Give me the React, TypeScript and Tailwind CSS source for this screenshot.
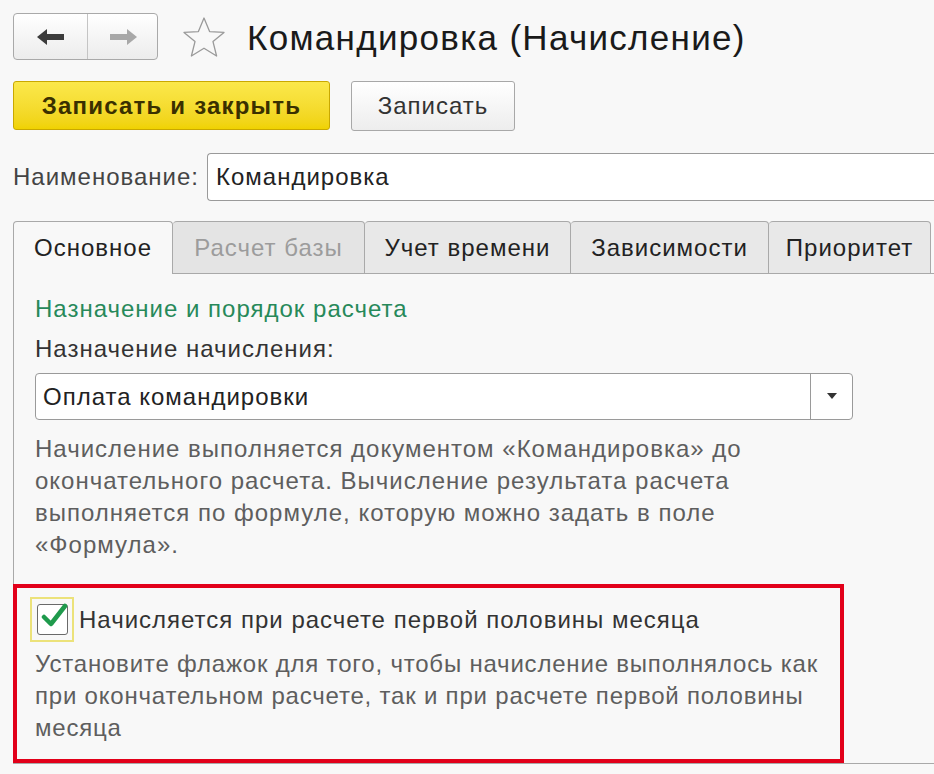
export default function App() {
  const font = { fontFamily: '"Liberation Sans", Arial, sans-serif' };

  return (
    <div
      className="w-[934px] h-[774px] overflow-hidden bg-[#f8f8f8] text-[#333] pl-[13px] tracking-[1px]"
      style={font}
    >
      {/* Шапка */}
      <div className="flex items-center pt-[13px]">
        <div className="flex h-[47px] w-[145px] rounded-[4px] border border-[#a9a9a9] bg-gradient-to-b from-white to-[#ececec]">
          <div className="flex w-[74px] items-center justify-center border-r border-[#c4c4c4]">
            <svg width="28" height="18" viewBox="0 0 28 18">
              <path d="M0 9 L10 1 L10 6 L27 6 L27 12 L10 12 L10 17 Z" fill="#3c3c3c" />
            </svg>
          </div>
          <div className="flex flex-1 items-center justify-center">
            <svg width="28" height="18" viewBox="0 0 28 18">
              <path d="M28 9 L18 1 L18 6 L1 6 L1 12 L18 12 L18 17 Z" fill="#a8a8a8" />
            </svg>
          </div>
        </div>
        <svg className="ml-[24px]" width="44" height="42" viewBox="0 0 44 42">
          <path
            d="M22 2 L27.6 15.6 L42 16.4 L31 25.6 L34.6 40 L22 32.2 L9.4 40 L13 25.6 L2 16.4 L16.4 15.6 Z"
            fill="none"
            stroke="#9a9a9a"
            strokeWidth="1.3"
            strokeLinejoin="round"
          />
        </svg>
        <h1 className="ml-[21px] mt-[2px] text-[35px] leading-none tracking-[1.3px] text-[#1a1a1a]">
          Командировка (Начисление)
        </h1>
      </div>

      {/* Кнопки */}
      <div className="mt-[21px] flex gap-[21px]">
        <button className="h-[49px] w-[317px] rounded-[3px] border border-[#c9a800] bg-gradient-to-b from-[#fbe84a] to-[#f0d200] text-[24px] tracking-[1.2px] text-[#3a3000] font-bold">
          Записать и закрыть
        </button>
        <button className="h-[50px] w-[164px] rounded-[3px] border border-[#a8a8a8] bg-gradient-to-b from-white to-[#ededed] text-[24px] text-[#333]">
          Записать
        </button>
      </div>

      {/* Наименование */}
      <div className="mt-[22px] flex items-center">
        <span className="w-[194px] text-[24px] text-[#444]">Наименование:</span>
        <div className="flex h-[48px] flex-1 items-center rounded-l-[4px] border border-r-0 border-[#9a9a9a] bg-white pl-[8px] text-[24px] text-[#222]">
          Командировка
        </div>
      </div>

      {/* Вкладки */}
      <div className="mt-[20px] flex h-[53px] text-[24px]">
        <div className="flex w-[160px] items-center justify-center rounded-t-[4px] border border-b-0 border-[#a9a9a9] bg-[#f8f8f8] text-[#222]">
          Основное
        </div>
        <div className="flex w-[192px] items-center justify-center rounded-t-[4px] border border-l-0 border-[#a9a9a9] bg-[#e4e4e4] text-[#9c9c9c]">
          Расчет базы
        </div>
        <div className="flex w-[206px] items-center justify-center rounded-t-[4px] border border-l-0 border-[#a9a9a9] bg-[#e8e8e8] text-[#222]">
          Учет времени
        </div>
        <div className="flex w-[198px] items-center justify-center rounded-t-[4px] border border-l-0 border-[#a9a9a9] bg-[#e8e8e8] text-[#222]">
          Зависимости
        </div>
        <div className="flex w-[162px] items-center justify-center rounded-t-[4px] border border-l-0 border-[#a9a9a9] bg-[#e8e8e8] text-[#222]">
          Приоритет
        </div>
        <div className="flex-1 border-b border-[#a9a9a9]" />
      </div>

      {/* Панель вкладки */}
      <div className="h-[490px] border-l border-b border-[#a9a9a9]">
        <div className="pl-[21px] pt-[19px] text-[24px]">
          <div className="leading-[32px] text-[#27895a]">Назначение и порядок расчета</div>
          <div className="mt-[8px] leading-[32px] text-[#333]">Назначение начисления:</div>
          <div className="mt-[8px] flex h-[47px] w-[818px] rounded-[4px] border border-[#9a9a9a] bg-white">
            <div className="flex flex-1 items-center pl-[7px] text-[#222]">Оплата командировки</div>
            <div className="flex w-[42px] items-center justify-center border-l border-[#9a9a9a]">
              <svg width="10" height="7" viewBox="0 0 10 7">
                <path d="M0 0 L10 0 L5 6 Z" fill="#333" />
              </svg>
            </div>
          </div>
          <div className="mt-[13px] whitespace-nowrap leading-[32px] text-[#5e5e5e]">
            <div>Начисление выполняется документом «Командировка» до</div>
            <div>окончательного расчета. Вычисление результата расчета</div>
            <div>выполняется по формуле, которую можно задать в поле</div>
            <div>«Формула».</div>
          </div>
        </div>

        {/* Выделенная область */}
        <div className="-ml-px mt-[23px] h-[179px] w-[831px] border-[4px] border-[#e2001a] pl-[13px] pt-[9px] text-[24px]">
          <div className="flex items-center">
            <div className="flex h-[45px] w-[44px] items-center justify-center border-2 border-[#ece27a]">
              <div className="relative h-[31px] w-[31px] rounded-[3px] border border-[#6a6a6a] bg-white">
                <svg className="absolute -top-[3px] left-[2px]" width="28" height="28" viewBox="0 0 28 28">
                  <path
                    d="M4 15 L11 22 L25 4"
                    fill="none"
                    stroke="#1f9a4c"
                    strokeWidth="4.5"
                    strokeLinecap="round"
                    strokeLinejoin="round"
                  />
                </svg>
              </div>
            </div>
            <span className="ml-[5px] whitespace-nowrap text-[#333]">
              Начисляется при расчете первой половины месяца
            </span>
          </div>
          <div className="mt-[6px] whitespace-nowrap pl-[5px] leading-[32px] tracking-[0.8px] text-[#5e5e5e]">
            <div>Установите флажок для того, чтобы начисление выполнялось как</div>
            <div>при окончательном расчете, так и при расчете первой половины</div>
            <div>месяца</div>
          </div>
        </div>
      </div>
    </div>
  );
}
